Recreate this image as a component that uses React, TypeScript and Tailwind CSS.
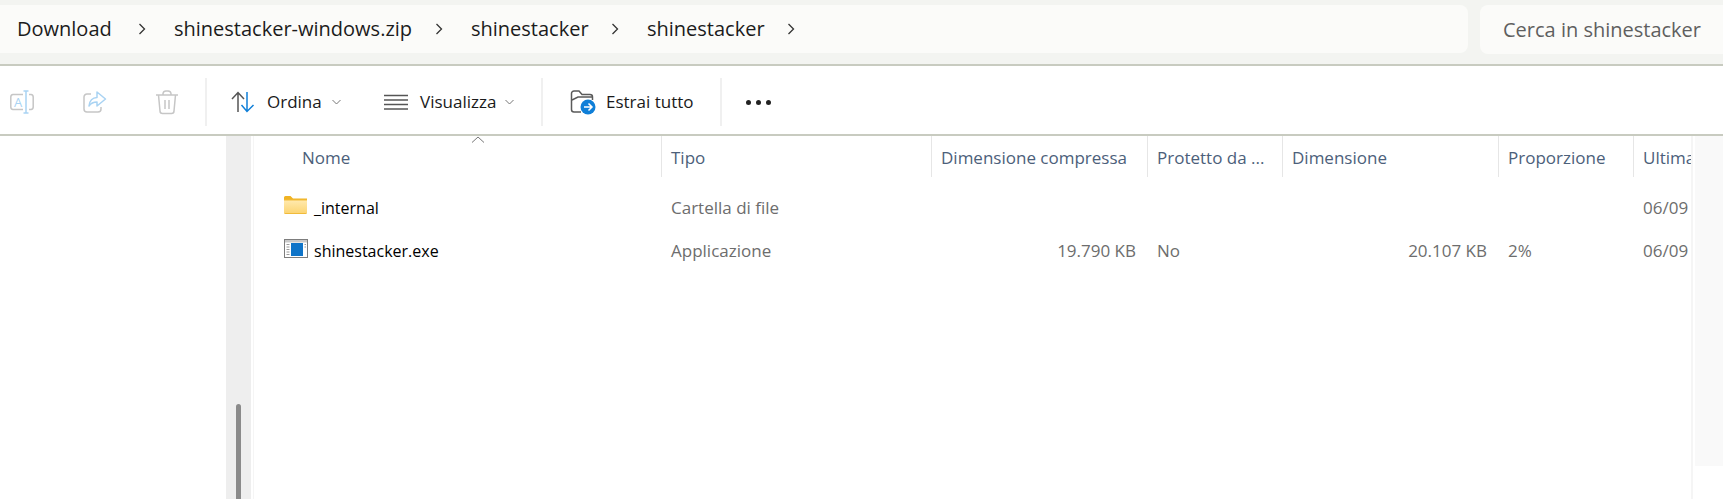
const crumbs = [
  { label: 'Download', width: 'w-[157px]' },
  { label: 'shinestacker-windows.zip', width: 'w-[297px]' },
  { label: 'shinestacker', width: 'w-[176px]' },
  { label: 'shinestacker', width: 'w-[176px]' },
];

function CrumbChevron() {
  return (
    <svg width="10" height="14" viewBox="0 0 10 14" fill="none" stroke="#333" strokeWidth="1.3">
      <path d="M2.500 2 7.500 7 2.500 12" />
    </svg>
  );
}

function SmallChevron() {
  return (
    <svg width="9" height="6" viewBox="0 0 9 6" fill="none" stroke="#777" strokeWidth="1">
      <path d="M.5 1l4 4 4-4" />
    </svg>
  );
}

function RenameIcon() {
  return (
    <svg width="24" height="24" viewBox="0 0 24 24" fill="none">
      <path d="M13 4.500H3A2.500 2.500 0 0 0 .8 7v10A2.500 2.500 0 0 0 3 19.500h10M19 4.500h2A2.500 2.500 0 0 1 23.200 7v10a2.500 2.500 0 0 1-2.200 2.500h-2" stroke="#c6c6c6" strokeWidth="1.500" />
      <path d="M16 1v22M13.500 1h5M13.500 23h5" stroke="#a9d3f3" strokeWidth="1.500" />
      <text x="8" y="17" textAnchor="middle" fontSize="13" fill="#a9d3f3" fontFamily="Open Sans">A</text>
    </svg>
  );
}

function ShareIcon() {
  return (
    <svg width="24" height="22" viewBox="0 0 24 22" fill="none">
      <path d="M8 3H4A3 3 0 0 0 1 6v12a3 3 0 0 0 3 3h11a3 3 0 0 0 3-3v-2" stroke="#c6c6c6" strokeWidth="1.500" />
      <path d="M14 1l8.500 7-8.500 7v-4c-3.500 0-6 1-8 4 .5-5 3.500-8.500 8-8.500z" stroke="#a9d3f3" strokeWidth="1.500" strokeLinejoin="round" />
    </svg>
  );
}

function TrashIcon() {
  return (
    <svg width="24" height="26" viewBox="0 0 24 26" fill="none" stroke="#c6c6c6" strokeWidth="1.500">
      <path d="M1 6h22M8 6V4.500A3 3 0 0 1 11 2h2a3 3 0 0 1 3 2.500V6M3.500 6l1.500 16a2.500 2.500 0 0 0 2.500 2.500h9A2.500 2.500 0 0 0 19 22l1.500-16M10 11v9M14 11v9" />
    </svg>
  );
}

function SortIcon() {
  return (
    <svg width="24" height="24" viewBox="0 0 24 24" fill="none" strokeWidth="1.500">
      <path d="M7 22V3M1 9l6-6.500L13 9" stroke="#555" />
      <path d="M16 2v19M10.500 15l5.500 6.500 6.500-6.500" stroke="#0f7fd8" />
    </svg>
  );
}

function ViewIcon() {
  return (
    <svg width="24" height="16" viewBox="0 0 24 16" fill="none" stroke="#555" strokeWidth="1.500">
      <path d="M0 1.500h24M0 6h24M0 10.500h24M0 15h24" />
    </svg>
  );
}

function ExtractIcon() {
  return (
    <svg width="26" height="26" viewBox="0 0 26 26" fill="none">
      <path d="M11 23H4a2.500 2.500 0 0 1-2.500-2.500v-16A2.500 2.500 0 0 1 4 2h5l3 3.500h8A2.500 2.500 0 0 1 22.500 8v3" stroke="#5a5a5a" strokeWidth="1.500" />
      <path d="M2 11l6-3h14" stroke="#5a5a5a" strokeWidth="1.500" />
      <circle cx="18" cy="18" r="7.500" fill="#0f7fd8" />
      <path d="M14 18h8M18.500 14.500 22 18l-3.500 3.500" stroke="#fff" strokeWidth="1.500" fill="none" />
    </svg>
  );
}

function FolderIcon() {
  return (
    <svg width="23" height="18" viewBox="0 0 23 18">
      <defs>
        <linearGradient id="folderFill" x1="0" y1="0" x2="0" y2="1">
          <stop offset="0" stopColor="#ffe9ad" />
          <stop offset="1" stopColor="#fcd574" />
        </linearGradient>
      </defs>
      <path d="M0 1.500A1.500 1.500 0 0 1 1.500 0h5L9 2.500h14V4H0z" fill="#f0b323" />
      <path d="M0 3.500h23v13a1.500 1.500 0 0 1-1.500 1.500h-20A1.500 1.500 0 0 1 0 16.500z" fill="#f1bb3a" />
      <path d="M0 4.500h23v12a.5.5 0 0 1-.5.5H.5a.5.5 0 0 1-.5-.5z" fill="url(#folderFill)" />
    </svg>
  );
}

function ExeIcon() {
  return (
    <svg width="24" height="19" viewBox="0 0 24 19">
      <rect x="0.500" y="0.500" width="23" height="18" fill="#fff" stroke="#7d7d7d" />
      <rect x="1" y="1" width="22" height="2.500" fill="#c9c9c9" />
      <rect x="7" y="4" width="12" height="13" fill="#0f74c8" />
      <path d="M2.500 5.500h3M2.500 8h3M2.500 10.500h3M2.500 13h3M2.500 15.500h3M20.500 5.500h1.500M20.500 8h1.500" stroke="#9a9a9a" />
    </svg>
  );
}

function ToolButton({ icon, className }: { icon: React.ReactNode; className: string }) {
  return <div className={`flex items-center justify-center ${className}`}>{icon}</div>;
}

const headers = [
  { label: 'Nome', width: 'w-[408px]', pad: 'pl-[48px]' },
  { label: 'Tipo', width: 'w-[270px]', pad: 'pl-[9px]' },
  { label: 'Dimensione compressa', width: 'w-[216px]', pad: 'pl-[9px]' },
  { label: 'Protetto da ...', width: 'w-[135px]', pad: 'pl-[9px]' },
  { label: 'Dimensione', width: 'w-[216px]', pad: 'pl-[9px]' },
  { label: 'Proporzione', width: 'w-[135px]', pad: 'pl-[9px]' },
  { label: 'Ultima', width: 'w-[57px]', pad: 'pl-[9px]' },
];

function FileRow({
  icon,
  name,
  type,
  compressed,
  prot,
  size,
  ratio,
}: {
  icon: React.ReactNode;
  name: string;
  type: string;
  compressed?: string;
  prot?: string;
  size?: string;
  ratio?: string;
}) {
  return (
    <div className="flex h-[43px] items-center text-[#6d6d6d]">
      <div className="flex w-[408px] items-center pl-[30px]">
        <div className="mb-[5px] flex w-[30px] items-center">{icon}</div>
        <span className="text-[16px] text-black">{name}</span>
      </div>
      <div className="w-[270px] pl-[9px]">{type}</div>
      <div className="w-[216px] pr-[12px] text-right">{compressed}</div>
      <div className="w-[135px] pl-[9px]">{prot}</div>
      <div className="w-[216px] pr-[12px] text-right">{size}</div>
      <div className="w-[135px] pl-[9px]">{ratio}</div>
      <div className="w-[57px] whitespace-nowrap pl-[9px]">06/09</div>
    </div>
  );
}

export default function App() {
  return (
    <div className="flex h-[499px] w-[1723px] flex-col overflow-hidden bg-white font-['Open_Sans',sans-serif] text-[17px] text-[#1a1a1a]">
      {/* address bar */}
      <div className="flex h-[64px] items-start gap-[12px] bg-[#f3f4f1] pt-[5px]">
        <div className="flex h-[48px] w-[1468px] items-center rounded-r-lg bg-[#fbfbf9] pl-[17px] text-[20px] text-[#1c1c1c]">
          {crumbs.map((c) => (
            <div key={c.label + c.width} className={`flex items-center ${c.width}`}>
              <span className="whitespace-nowrap">{c.label}</span>
              <span className="ml-auto mr-[27px] flex">
                <CrumbChevron />
              </span>
            </div>
          ))}
        </div>
        <div className="flex h-[49px] flex-1 items-center rounded-l-lg bg-[#fbfbf9] pl-[23px] text-[20px] text-[#5f5f5f]">
          Cerca in shinestacker
        </div>
      </div>
      <div className="h-[2px] bg-[#c8cbc0]" />

      {/* toolbar */}
      <div className="flex h-[68px] items-center pt-[4px]">
        <ToolButton icon={<RenameIcon />} className="ml-[9px] w-[26px]" />
        <ToolButton icon={<ShareIcon />} className="ml-[47px] w-[26px]" />
        <ToolButton icon={<TrashIcon />} className="ml-[46px] w-[26px]" />
        <div className="ml-[25px] h-[48px] w-[2px] bg-[#f0f0f0]" />
        <ToolButton icon={<SortIcon />} className="ml-[24px] w-[24px]" />
        <span className="ml-[12px] w-[55px]">Ordina</span>
        <span className="ml-[10px] flex">
          <SmallChevron />
        </span>
        <ToolButton icon={<ViewIcon />} className="ml-[43px] w-[24px]" />
        <span className="ml-[12px] w-[76px]">Visualizza</span>
        <span className="ml-[9px] flex">
          <SmallChevron />
        </span>
        <div className="ml-[27px] h-[48px] w-[2px] bg-[#f0f0f0]" />
        <ToolButton icon={<ExtractIcon />} className="ml-[27px] w-[26px]" />
        <span className="ml-[10px] w-[87px] whitespace-nowrap">Estrai tutto</span>
        <div className="ml-[27px] h-[48px] w-[2px] bg-[#f0f0f0]" />
        <div className="ml-[24px] flex gap-[5px]">
          <span className="size-[5px] rounded-full bg-[#222]" />
          <span className="size-[5px] rounded-full bg-[#222]" />
          <span className="size-[5px] rounded-full bg-[#222]" />
        </div>
      </div>
      <div className="h-[2px] bg-[#c8cbc0]" />

      {/* body */}
      <div className="flex flex-1">
        <div className="w-[226px]" />
        <div className="flex w-[25px] flex-col items-center justify-end bg-[#eeeeee]">
          <div className="h-[95px] w-[5px] rounded-t-sm bg-[#8a8a8a]" />
        </div>
        <div className="ml-[2px] w-[1px] bg-[#f5f5f5]" />

        <div className="relative w-[1437px] overflow-hidden">
          <div className="absolute left-[217px] top-0">
            <svg width="14" height="7" viewBox="0 0 14 7" fill="none" stroke="#777" strokeWidth="1">
              <path d="M1 6.500 7 1l6 5.500" />
            </svg>
          </div>
          <div className="mb-[9px] flex h-[41px] text-[#4c607a]">
            {headers.map((h, i) => (
              <div
                key={h.label}
                className={`flex items-center overflow-hidden whitespace-nowrap pt-[2px] ${h.width} ${h.pad} ${i < headers.length - 1 ? 'border-r border-[#e6e6e6]' : ''}`}
              >
                {h.label}
              </div>
            ))}
          </div>
          <FileRow icon={<FolderIcon />} name="_internal" type="Cartella di file" />
          <FileRow
            icon={<ExeIcon />}
            name="shinestacker.exe"
            type="Applicazione"
            compressed="19.790 KB"
            prot="No"
            size="20.107 KB"
            ratio="2%"
          />
        </div>

        <div className="w-[2px] bg-[#f5f5f5]" />
        <div className="ml-[2px] h-[330px] flex-1 bg-[#f9f9f9]" />
      </div>
    </div>
  );
}
